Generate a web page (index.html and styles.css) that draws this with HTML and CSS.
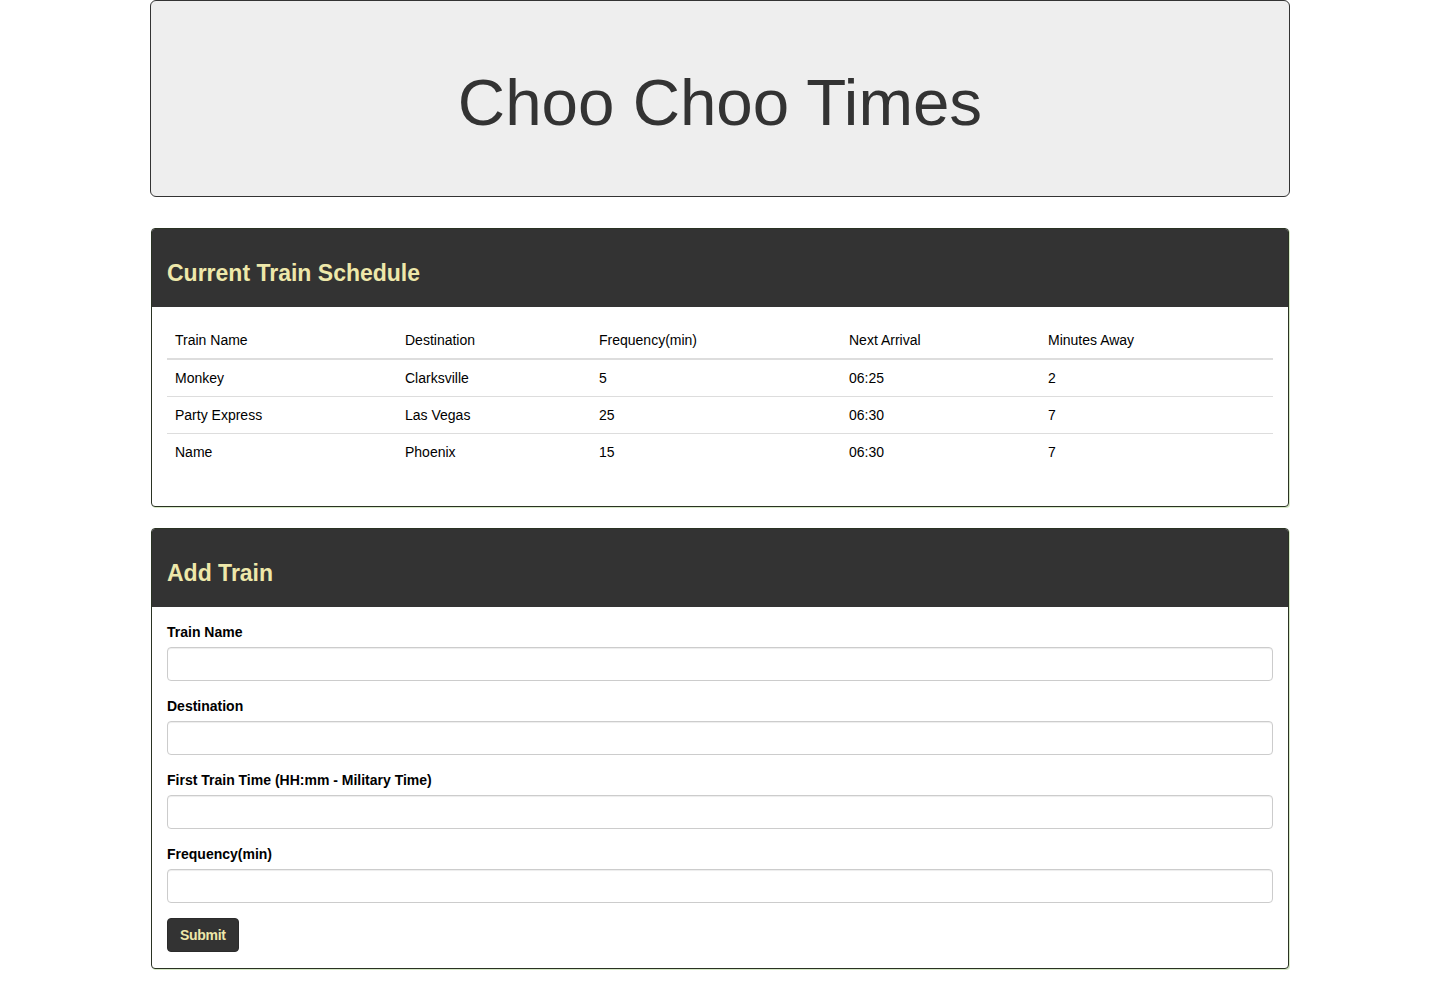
FILE: index.html
```html
<!DOCTYPE html>
<html>
<head>
	<title>Choo Choo Times</title>
	<meta charset="utf-8">
	<meta name="viewport" content="width=device-width, initial-scale=1.0">
	<link rel="stylesheet" href="styles.css">
</head>
<body>

<div class="container">
	<div class="jumbotron">
		<h1>Choo Choo Times</h1>
	</div>

	<div class="panel">
		<div class="panel-heading">
			<h3>Current Train Schedule</h3>
		</div>
		<div class="panel-body">
			<table class="schedule">
				<thead>
					<tr>
						<th class="c1">Train Name</th>
						<th class="c2">Destination</th>
						<th class="c3">Frequency(min)</th>
						<th class="c4">Next Arrival</th>
						<th class="c5">Minutes Away</th>
					</tr>
				</thead>
				<tbody>
					<tr>
						<td>Monkey</td>
						<td>Clarksville</td>
						<td>5</td>
						<td>06:25</td>
						<td>2</td>
					</tr>
					<tr>
						<td>Party Express</td>
						<td>Las Vegas</td>
						<td>25</td>
						<td>06:30</td>
						<td>7</td>
					</tr>
					<tr>
						<td>Name</td>
						<td>Phoenix</td>
						<td>15</td>
						<td>06:30</td>
						<td>7</td>
					</tr>
				</tbody>
			</table>
		</div>
	</div>

	<div class="panel">
		<div class="panel-heading">
			<h3>Add Train</h3>
		</div>
		<div class="panel-body">
			<form>
				<div class="form-group">
					<label for="train-name">Train Name</label>
					<input type="text" class="form-control" id="train-name">
				</div>
				<div class="form-group">
					<label for="destination">Destination</label>
					<input type="text" class="form-control" id="destination">
				</div>
				<div class="form-group">
					<label for="first-time">First Train Time (HH:mm - Military Time)</label>
					<input type="text" class="form-control" id="first-time">
				</div>
				<div class="form-group">
					<label for="frequency">Frequency(min)</label>
					<input type="text" class="form-control" id="frequency">
				</div>
				<button type="button" class="btn">Submit</button>
			</form>
		</div>
	</div>
</div>

</body>
</html>
```

FILE: styles.css
```css
* {
	box-sizing: border-box;
}
body {
	margin: 0;
	font-family: "Liberation Sans", Arial, Helvetica, sans-serif;
	font-size: 14px;
	line-height: 20px;
	color: #000;
	background: #fff;
}
.container {
	width: 1140px;
	margin: 0 auto;
}
.jumbotron {
	height: 197px;
	margin-bottom: 31px;
	background: #eee;
	border: 1px solid #333;
	border-radius: 6px;
	display: flex;
	align-items: center;
	justify-content: center;
}
.jumbotron h1 {
	margin: 10px 0 0;
	font-size: 65.5px;
	font-weight: normal;
	line-height: 1.1;
	color: #333;
}
.panel {
	margin: 0 1px 21px;
	background: #fff;
	border: 1px solid #2a3323;
	border-radius: 4px;
	box-shadow: 1px 1px 0 #d6e9c6;
}
.panel-heading {
	padding: 10px 15px;
	background: #333;
	border-radius: 3px 3px 0 0;
	color: #eee8aa;
}
.panel-heading h3 {
	margin: 20px 0 10px;
	font-size: 23px;
	font-weight: bold;
	line-height: 28px;
}
.panel-body {
	padding: 15px 15px 16px;
}
.schedule {
	width: 100%;
	margin-bottom: 20px;
	border-collapse: collapse;
	border-spacing: 0;
}
.schedule th,
.schedule td {
	padding: 8px;
	text-align: left;
	font-weight: normal;
	vertical-align: top;
}
.schedule th {
	border-bottom: 2px solid #ddd;
}
.schedule tbody tr + tr td {
	border-top: 1px solid #ddd;
}
.schedule .c1 { width: 230px; }
.schedule .c2 { width: 194px; }
.schedule .c3 { width: 250px; }
.schedule .c4 { width: 199px; }
.form-group {
	margin-bottom: 15px;
}
.form-group label {
	display: inline-block;
	margin-bottom: 5px;
	font-weight: bold;
}
.form-control {
	display: block;
	width: 100%;
	height: 34px;
	padding: 6px 12px;
	font: inherit;
	border: 1px solid #ccc;
	border-radius: 4px;
	box-shadow: inset 0 1px 1px rgba(0, 0, 0, 0.075);
}
.btn {
	display: inline-block;
	height: 34px;
	padding: 6px 12px;
	font: inherit;
	font-weight: bold;
	letter-spacing: -0.3px;
	color: #eee8aa;
	background: #333;
	border: 1px solid #2b2b2b;
	border-radius: 4px;
	cursor: pointer;
}
```
